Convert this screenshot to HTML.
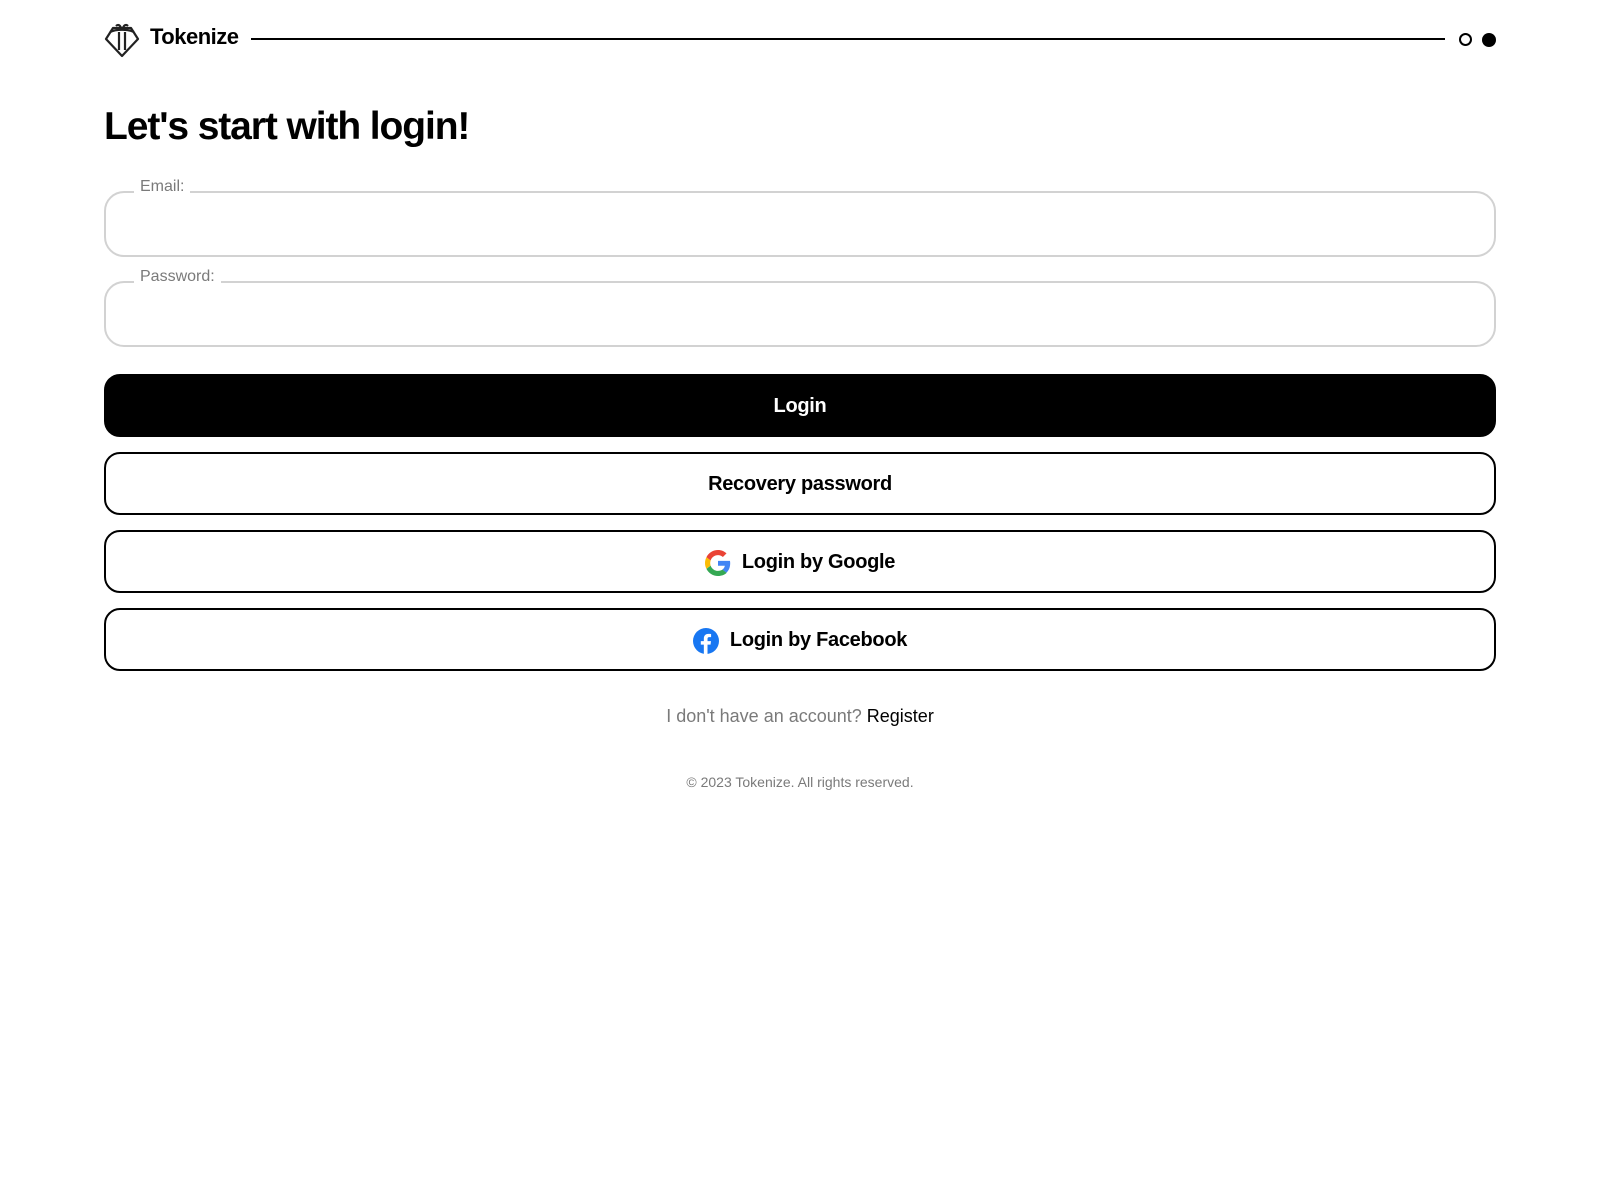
<!DOCTYPE html>
<html><head><meta charset="utf-8">
<style>
*{box-sizing:border-box;margin:0;padding:0}
html,body{width:1600px;height:1200px;background:#fff;font-family:"Liberation Sans",sans-serif;color:#000;position:relative;overflow:hidden}
.abs{position:absolute}
.field{position:absolute;left:104px;width:1392px;height:66px;border:2px solid #d2d2d2;border-radius:20px}
.lbl{position:absolute;left:28px;top:-16px;background:#fff;padding:0 6px;color:#7a7a7a;font-size:16px;line-height:20px}
.btn{position:absolute;left:104px;width:1392px;height:63px;border:2px solid #000;border-radius:16px;display:flex;align-items:center;justify-content:center;font-weight:bold;font-size:20px;letter-spacing:-0.3px;padding-top:2px}
</style></head><body>
<svg class="abs" style="left:104px;top:22px" width="36" height="36" viewBox="0 0 36 36" fill="none" stroke="#222" stroke-width="2.2" stroke-linejoin="round">
<path d="M9 6 L27 6 L34 17 L18 34 L2 17 Z"/>
<path d="M6 10 C12 7 24 7 30 10"/>
<path d="M15 10 L15 28 M21 10 L21 28"/>
<path d="M12 4 C14 2 16 3 17 6 M24 4 C22 2 20 3 19 6"/>
</svg>
<div class="abs" style="left:150px;top:24px;font-size:22px;font-weight:bold;letter-spacing:-0.5px">Tokenize</div>
<div class="abs" style="left:251px;top:38px;width:1194px;height:2px;background:#000"></div>
<div class="abs" style="left:1459px;top:33px;width:13px;height:13px;border:2px solid #000;border-radius:50%"></div>
<div class="abs" style="left:1482px;top:33px;width:14px;height:14px;background:#000;border-radius:50%"></div>
<div class="abs" style="left:104px;top:105px;font-size:39px;font-weight:bold;letter-spacing:-1.1px">Let's start with login!</div>
<div class="field" style="top:191px"><span class="lbl">Email:</span></div>
<div class="field" style="top:281px"><span class="lbl">Password:</span></div>
<div class="btn" style="top:374px;background:#000;color:#fff">Login</div>
<div class="btn" style="top:452px">Recovery password</div>
<div class="btn" style="top:530px"><svg width="26" height="26" viewBox="0 0 48 48" style="margin-right:11px"><path fill="#EA4335" d="M24 9.5c3.5 0 6.6 1.2 9 3.5l6.7-6.7C35.6 2.4 30.2 0 24 0 14.6 0 6.6 5.4 2.6 13.3l7.8 6C12.3 13.6 17.7 9.5 24 9.5z"/><path fill="#4285F4" d="M46.5 24.5c0-1.6-.1-3.1-.4-4.5H24v9h12.7c-.6 3-2.3 5.5-4.8 7.2l7.6 5.9c4.4-4.1 7-10.1 7-17.6z"/><path fill="#FBBC05" d="M10.4 28.7c-.5-1.5-.8-3-.8-4.7s.3-3.2.8-4.7l-7.8-6C.9 16.6 0 20.2 0 24s.9 7.4 2.6 10.7l7.8-6z"/><path fill="#34A853" d="M24 48c6.5 0 11.9-2.1 15.9-5.8l-7.6-5.9c-2.1 1.4-4.9 2.300-8.3 2.3-6.3 0-11.7-4.1-13.6-9.8l-7.8 6C6.6 42.6 14.6 48 24 48z"/></svg>Login by Google</div>
<div class="btn" style="top:608px"><svg width="26" height="26" viewBox="0 0 24 24" style="margin-right:11px"><circle cx="12" cy="12" r="12" fill="#1877F2"/><path fill="#fff" d="M13.4 24v-8.6h2.8l.4-3.3h-3.2V10c0-.9.3-1.6 1.6-1.6h1.7V5.5c-.3 0-1.3-.1-2.5-.1-2.5 0-4.2 1.5-4.2 4.3v2.4H7.2v3.3H10V24z"/></svg>Login by Facebook</div>
<div class="abs" style="left:0;width:1600px;top:706px;text-align:center;font-size:18px;color:#7a7a7a">I don't have an account? <span style="color:#000">Register</span></div>
<div class="abs" style="left:0;width:1600px;top:774px;text-align:center;font-size:14px;color:#7a7a7a">© 2023 Tokenize. All rights reserved.</div>
</body></html>
